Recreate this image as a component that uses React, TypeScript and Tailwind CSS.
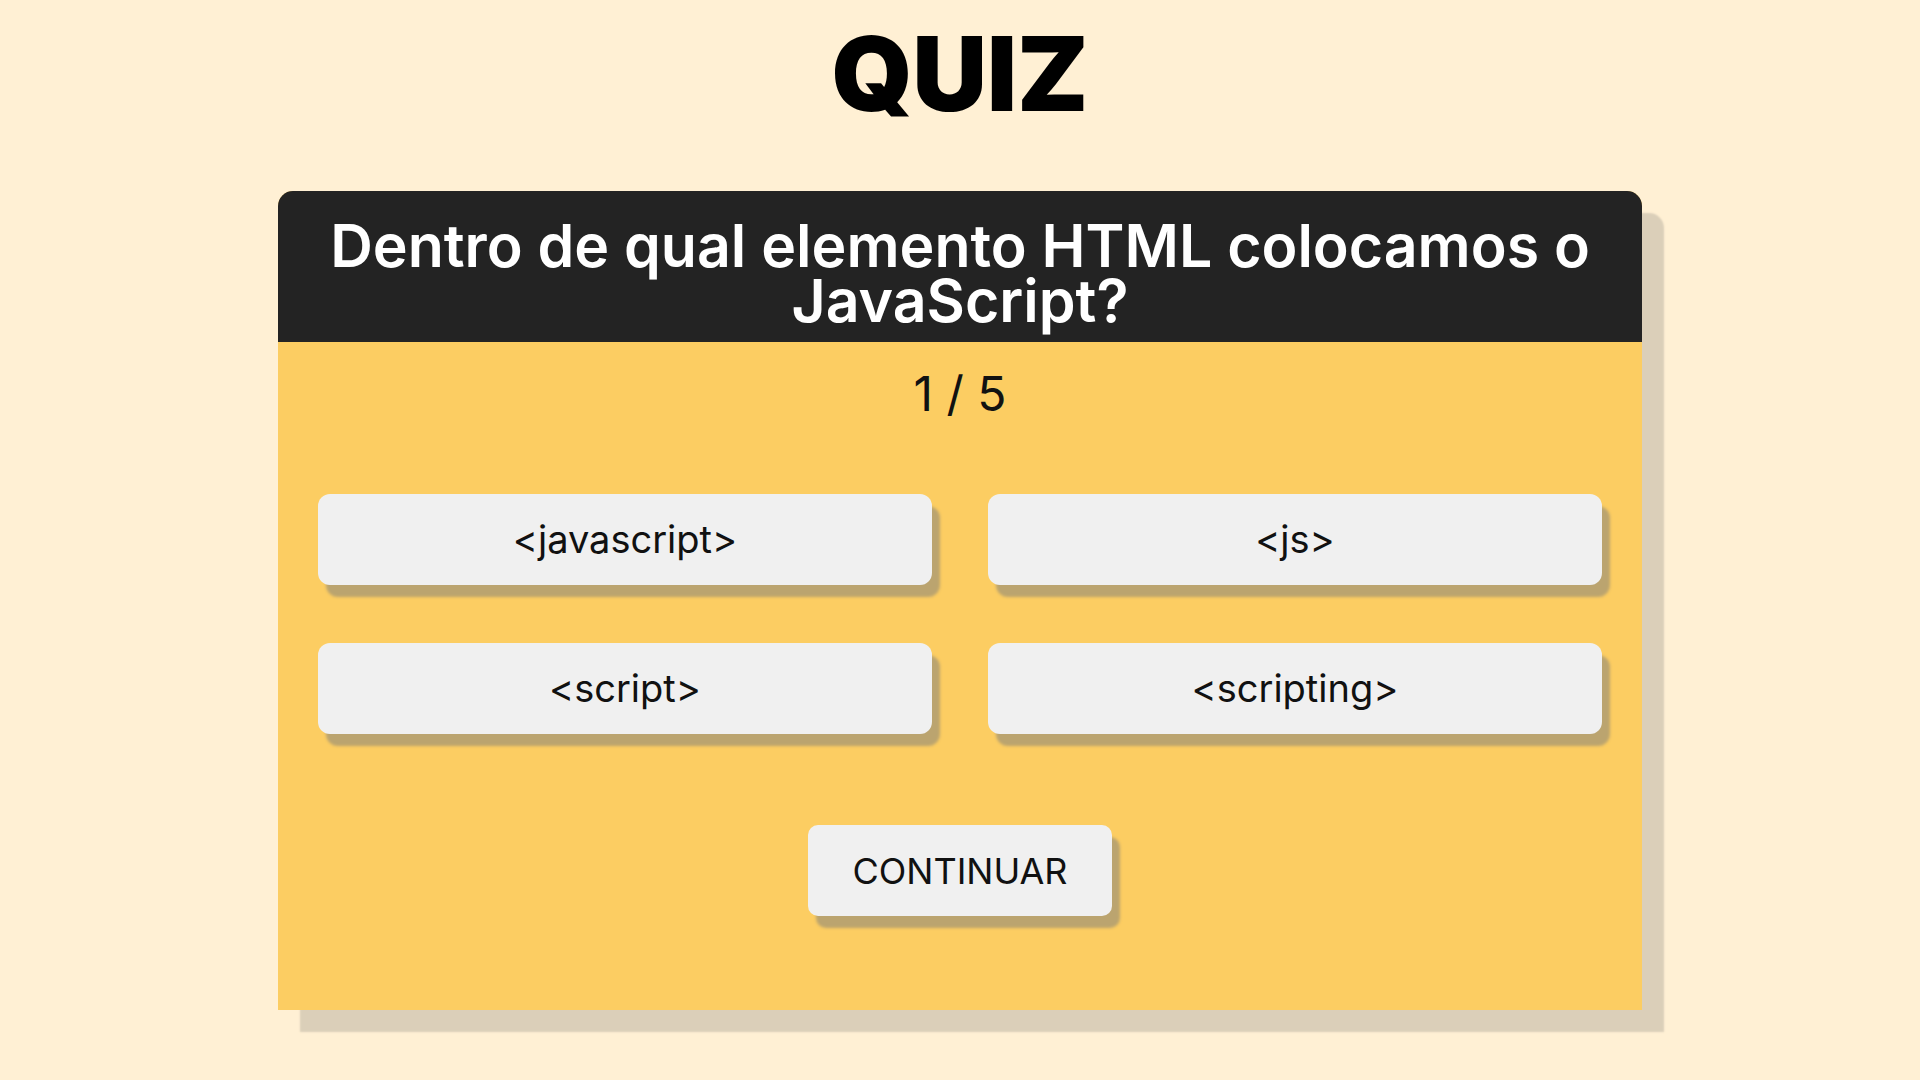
import React from "react";

const ANSWERS = ["<javascript>", "<js>", "<script>", "<scripting>"];

export default function App() {
  return (
    <div className="min-h-screen bg-[#fff0d4] flex flex-col items-center font-['Inter',sans-serif] text-[#111]">
      <h1 className="mt-[22px] text-[103px] font-black leading-none text-black">QUIZ</h1>

      {/* quiz card */}
      <div className="mt-[66px] w-[1364px] rounded-t-[15px] bg-[#fccd62] shadow-[22px_22px_2px_#dbcfb9]">
        <div className="rounded-t-[15px] bg-[#232323] h-[151px] pt-[27px] px-10 text-center text-white text-[59px] font-semibold leading-[55px]">
          Dentro de qual elemento HTML colocamos o JavaScript?
        </div>

        <div className="px-10 pt-[28px] pb-[94px] flex flex-col items-center">
          <p className="text-[48px] leading-none">1 / 5</p>

          <div className="mt-[76px] w-full grid grid-cols-2 gap-x-[56px] gap-y-[58px]">
            {ANSWERS.map((a) => (
              <button
                key={a}
                className="h-[91px] rounded-[12px] bg-[#f0f0f0] shadow-[8px_12px_3px_#bba46f] text-[38px] text-[#111]"
              >
                {a}
              </button>
            ))}
          </div>

          <button className="mt-[91px] w-[304px] h-[91px] rounded-[10px] bg-[#f0f0f0] shadow-[8px_12px_3px_#bba46f] text-[36px] text-[#111]">
            CONTINUAR
          </button>
        </div>
      </div>
    </div>
  );
}
